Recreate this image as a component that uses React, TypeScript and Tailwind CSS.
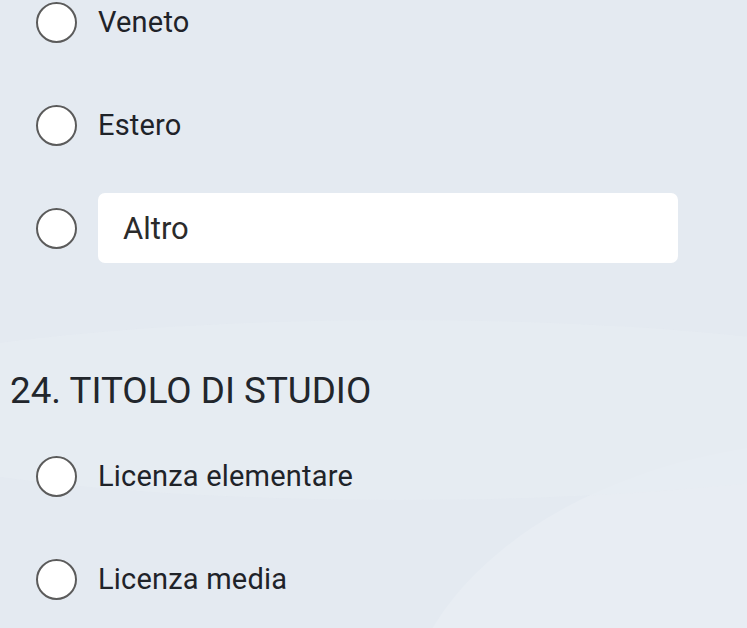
const font = { fontFamily: 'Roboto, "Noto Sans", sans-serif' }

function Radio() {
  return <span className="block w-[41px] h-[41px] shrink-0 rounded-full border-[2.5px] border-[#5b5b5b] bg-white" />
}

function Option({ label }: { label: string }) {
  return (
    <div className="flex items-center h-[44px] pl-[36px]">
      <Radio />
      <span className="ml-[21px] text-[29px] tracking-[0.2px] text-[#1f2329] leading-none">{label}</span>
    </div>
  )
}

export default function App() {
  return (
    <div
      className="relative w-[747px] h-[628px] overflow-hidden bg-[#e4eaf1]"
      style={font}
    >
      <div className="pointer-events-none absolute left-[400px] top-[440px] w-[900px] h-[600px] rounded-[50%] bg-[#e8edf3]" />
      <div className="pointer-events-none absolute left-[-200px] top-[320px] w-[1200px] h-[180px] rounded-[50%] bg-[#e7ecf2] opacity-70" />
      <div className="relative flex flex-col">
        <Option label="Veneto" />
        <div className="mt-[59px]">
          <Option label="Estero" />
        </div>
        <div className="mt-[46px] flex items-center h-[70px] pl-[36px]">
          <Radio />
          <div className="ml-[21px] w-[580px] h-[70px] rounded-[7px] bg-white flex items-center pl-[25px]">
            <span className="text-[31px] text-[#2b2b2b] leading-none">Altro</span>
          </div>
        </div>
        <h2 className="mt-[108px] pl-[10px] text-[36.8px] leading-[40px] text-[#22262c] font-normal">
          24. TITOLO DI STUDIO
        </h2>
        <div className="mt-[43px]">
          <Option label="Licenza elementare" />
        </div>
        <div className="mt-[59px]">
          <Option label="Licenza media" />
        </div>
      </div>
    </div>
  )
}
